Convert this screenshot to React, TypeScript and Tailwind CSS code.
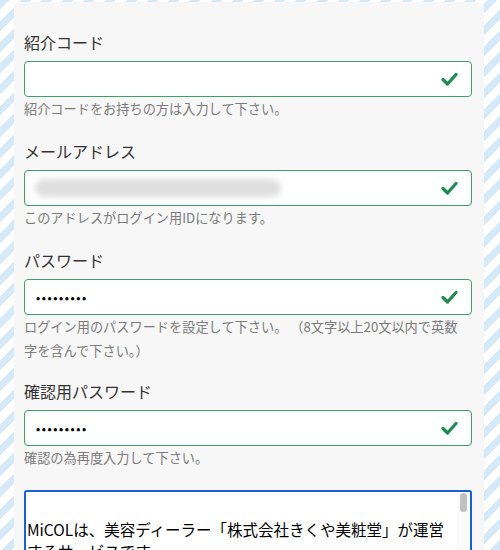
import React from 'react';

const Check = () => (
  <svg width="17" height="14" viewBox="0 0 17 14" className="absolute right-[13px] top-1/2 -translate-y-1/2">
    <polyline points="2,7.5 6.5,12 15,2.5" fill="none" stroke="#1f8a4f" strokeWidth="3.2" strokeLinecap="round" strokeLinejoin="round" />
  </svg>
);

type FieldProps = {
  label: string;
  help: React.ReactNode;
  children?: React.ReactNode;
  first?: boolean;
};

const Field: React.FC<FieldProps> = ({ label, help, children, first }) => (
  <div className={first ? '' : 'mt-[18px]'}>
    <div className="text-[16px] leading-6 text-[#333]">{label}</div>
    <div className="relative mt-[7px] h-9 rounded-[4px] border-[1.5px] border-[#3f9e6b] bg-white flex items-center">
      {children}
      <Check />
    </div>
    <div className="text-[13.2px] leading-6 text-[#7b7b7b]">{help}</div>
  </div>
);

const Dots = () => (
  <span className="pl-[11px] text-[11px] tracking-[1.6px] text-black font-bold">•••••••••</span>
);

export default function App() {
  return (
    <div
      className="w-[500px] h-[550px] overflow-hidden bg-[repeating-linear-gradient(135deg,#d5e9f8_0px,#d5e9f8_7px,#ffffff_7px,#ffffff_15px)]"
      style={{ fontFamily: '"Noto Sans CJK JP", "Noto Sans", sans-serif' }}
    >
      <div className="ml-[14px] mt-[2px] w-[470px] h-[560px] rounded-t-[6px] bg-[#f7f7f7] pl-[10px] pr-[12px] pt-[28px]">
        <Field first label="紹介コード" help="紹介コードをお持ちの方は入力して下さい。" />
        <Field label="メールアドレス" help="このアドレスがログイン用IDになります。">
          <div className="ml-[10px] h-[18px] w-[246px] rounded-full bg-[#dedede] blur-[3px]" />
        </Field>
        <Field
          label="パスワード"
          help={
            <>
              ログイン用のパスワードを設定して下さい。 （8文字以上20文以内で英数
              <br />
              字を含んで下さい。）
            </>
          }
        >
          <Dots />
        </Field>
        <div className="-mt-[2px]">
          <Field label="確認用パスワード" help="確認の為再度入力して下さい。">
            <Dots />
          </Field>
        </div>
        <div className="relative mt-[20px] h-[80px] rounded-[3px] border-2 border-[#1b5fd8] bg-white overflow-hidden">
          <div className="pl-[1px] pt-[4px] pr-[16px] text-[15.5px] leading-[22px] text-black whitespace-nowrap">
            <div className="h-[22px]" />
            <div>MiCOLは、美容ディーラー「株式会社きくや美粧堂」が運営</div>
            <div>するサービスです。</div>
          </div>
          <div className="absolute right-0 top-0 h-full w-[13px] bg-[#fafafa]">
            <div className="mx-auto mt-[1px] h-[19px] w-[7px] rounded-full bg-[#c1c1c1]" />
          </div>
        </div>
      </div>
    </div>
  );
}
